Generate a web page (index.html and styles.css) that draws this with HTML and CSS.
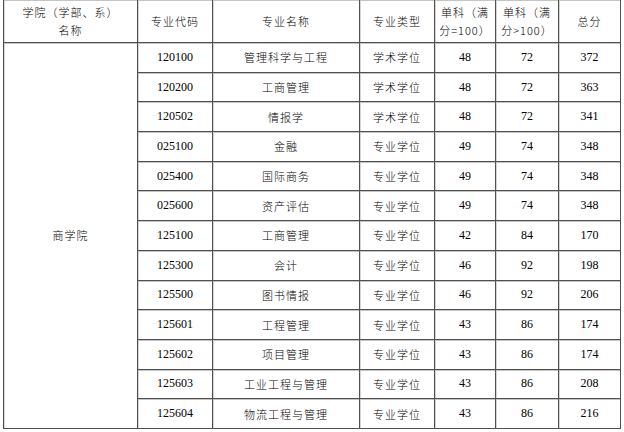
FILE: index.html
```html
<!DOCTYPE html>
<html lang="zh-CN">
<head>
<meta charset="utf-8">
<title>商学院</title>
<link rel="stylesheet" href="styles.css">
</head>
<body>
<table class="grid">
  <colgroup>
    <col class="c-school">
    <col class="c-code">
    <col class="c-name">
    <col class="c-type">
    <col class="c-s1">
    <col class="c-s2">
    <col class="c-total">
  </colgroup>
  <thead>
    <tr class="head">
      <th>学院（学部、系）<br>名称</th>
      <th>专业代码</th>
      <th>专业名称</th>
      <th>专业类型</th>
      <th>单科（满<br>分=100）</th>
      <th>单科（满<br>分&gt;100）</th>
      <th>总分</th>
    </tr>
  </thead>
  <tbody>
    <tr><td rowspan="13" class="school">商学院</td><td>120100</td><td class="cn">管理科学与工程</td><td class="cn">学术学位</td><td>48</td><td>72</td><td>372</td></tr>
    <tr><td>120200</td><td class="cn">工商管理</td><td class="cn">学术学位</td><td>48</td><td>72</td><td>363</td></tr>
    <tr><td>120502</td><td class="cn">情报学</td><td class="cn">学术学位</td><td>48</td><td>72</td><td>341</td></tr>
    <tr><td>025100</td><td class="cn">金融</td><td class="cn">专业学位</td><td>49</td><td>74</td><td>348</td></tr>
    <tr><td>025400</td><td class="cn">国际商务</td><td class="cn">专业学位</td><td>49</td><td>74</td><td>348</td></tr>
    <tr><td>025600</td><td class="cn">资产评估</td><td class="cn">专业学位</td><td>49</td><td>74</td><td>348</td></tr>
    <tr><td>125100</td><td class="cn">工商管理</td><td class="cn">专业学位</td><td>42</td><td>84</td><td>170</td></tr>
    <tr><td>125300</td><td class="cn">会计</td><td class="cn">专业学位</td><td>46</td><td>92</td><td>198</td></tr>
    <tr><td>125500</td><td class="cn">图书情报</td><td class="cn">专业学位</td><td>46</td><td>92</td><td>206</td></tr>
    <tr><td>125601</td><td class="cn">工程管理</td><td class="cn">专业学位</td><td>43</td><td>86</td><td>174</td></tr>
    <tr><td>125602</td><td class="cn">项目管理</td><td class="cn">专业学位</td><td>43</td><td>86</td><td>174</td></tr>
    <tr><td>125603</td><td class="cn">工业工程与管理</td><td class="cn">专业学位</td><td>43</td><td>86</td><td>208</td></tr>
    <tr><td>125604</td><td class="cn">物流工程与管理</td><td class="cn">专业学位</td><td>43</td><td>86</td><td>216</td></tr>
  </tbody>
</table>
</body>
</html>
```

FILE: styles.css
```css
html, body {
  margin: 0;
  padding: 0;
  background: #ffffff;
}

body {
  font-family: "Liberation Serif", "Noto Sans CJK SC", serif;
  font-size: 12px;
  color: #000000;
}

.grid {
  margin: -1px 0 0 3px;
  border-collapse: collapse;
  table-layout: fixed;
  width: 617px;
}

.c-school { width: 134px; }
.c-code { width: 75px; }
.c-name { width: 147px; }
.c-type { width: 75px; }
.c-s1 { width: 61px; }
.c-s2 { width: 63px; }
.c-total { width: 62px; }

.grid th,
.grid td {
  border: 1px solid #505050;
  box-shadow: inset 0 1px 0 #c4c4c4, inset 1px 0 0 #d4d4d4;
  padding: 0;
  text-align: center;
  vertical-align: middle;
  font-weight: 300;
}

.head th {
  height: 42px;
  line-height: 18px;
  font-family: "Noto Sans CJK SC", sans-serif;
  font-size: 11px;
  letter-spacing: 1px;
}

.head th br + * { }

.grid tbody td {
  height: 28.7px;
}

.grid .cn,
.grid .school {
  font-family: "Noto Sans CJK SC", sans-serif;
  font-size: 11px;
  letter-spacing: 1px;
}
```
